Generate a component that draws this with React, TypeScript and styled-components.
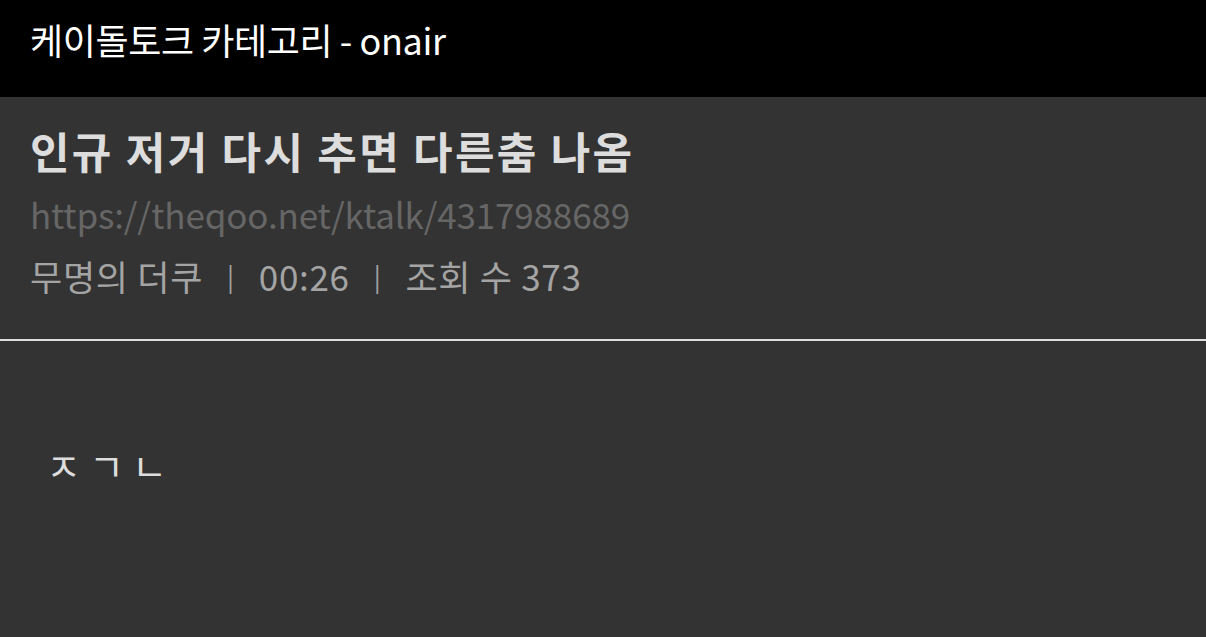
import React from 'react';
import styled, { createGlobalStyle } from 'styled-components';

const GlobalStyle = createGlobalStyle`
  html, body {
    margin: 0;
    padding: 0;
    background: #333333;
  }
  body {
    font-family: 'Noto Sans CJK KR', 'Noto Sans', sans-serif;
  }
`;

const Page = styled.div({
  width: '1206px',
  height: '637px',
  display: 'flex',
  flexDirection: 'column',
  backgroundColor: '#333333',
  overflow: 'hidden',
});

const Header = styled.header({
  height: '97px',
  flexShrink: 0,
  backgroundColor: '#000000',
  display: 'flex',
  alignItems: 'center',
  padding: '0 0 20px 30px',
  boxSizing: 'border-box',
});

const HeaderTitle = styled.h1({
  margin: 0,
  fontSize: '36px',
  fontWeight: 400,
  letterSpacing: '-0.4px',
  color: '#ffffff',
});

const Info = styled.section({
  display: 'flex',
  flexDirection: 'column',
  padding: '20px 30px 0',
  height: '244px',
  boxSizing: 'border-box',
  borderBottom: '2px solid #e0e0e0',
});

const PostTitle = styled.h2({
  margin: 0,
  fontSize: '43px',
  fontWeight: 700,
  lineHeight: '66px',
  letterSpacing: '2.3px',
  color: '#dddddd',
});

const Url = styled.div({
  fontSize: '35px',
  lineHeight: '62px',
  color: '#666666',
  letterSpacing: '-0.15px',
});

const Meta = styled.div({
  display: 'flex',
  alignItems: 'center',
  gap: '24px',
  fontSize: '35px',
  lineHeight: '62px',
  letterSpacing: '0.7px',
  color: '#a4a4a4',
});

const Sep = styled.span({
  fontSize: '26px',
});

const Body = styled.article({
  padding: '96px 46px 0',
  fontSize: '38px',
  color: '#dddddd',
  letterSpacing: '8px',
});

export default function App() {
  return (
    <Page>
      <GlobalStyle />
      <Header>
        <HeaderTitle>케이돌토크 카테고리 - onair</HeaderTitle>
      </Header>
      <Info>
        <PostTitle>인규 저거 다시 추면 다른춤 나옴</PostTitle>
        <Url>https://theqoo.net/ktalk/4317988689</Url>
        <Meta>
          <span>무명의 더쿠</span>
          <Sep>|</Sep>
          <span>00:26</span>
          <Sep>|</Sep>
          <span>조회 수 373</span>
        </Meta>
      </Info>
      <Body>ㅈㄱㄴ</Body>
    </Page>
  );
}
